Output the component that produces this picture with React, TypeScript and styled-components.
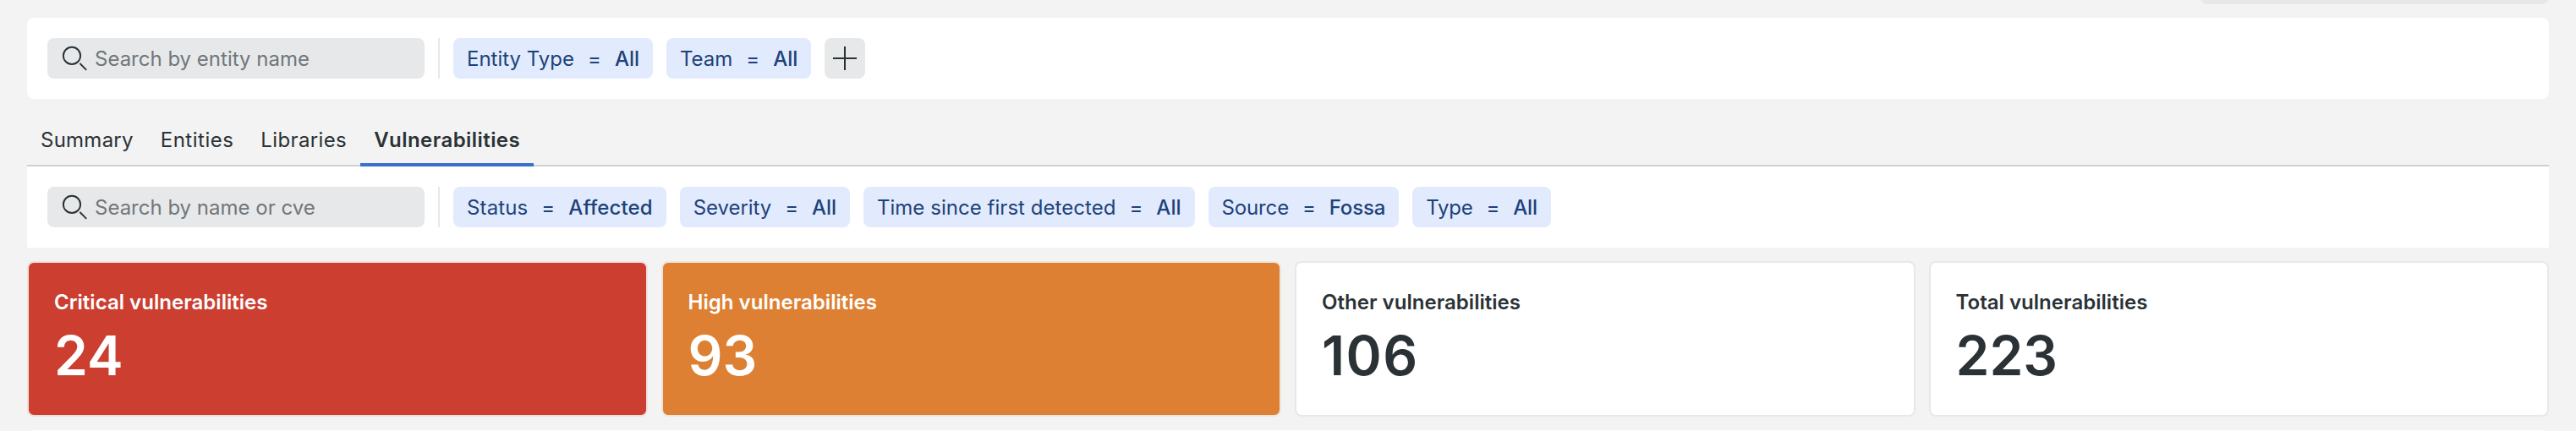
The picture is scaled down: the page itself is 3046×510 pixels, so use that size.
import React from "react";
import styled, { createGlobalStyle } from "styled-components";

const GlobalStyle = createGlobalStyle`
  * { box-sizing: border-box; }
  body {
    margin: 0;
    background: #f3f3f3;
    color: #2a3236;
    font-family: Inter, "Liberation Sans", sans-serif;
    font-size: 24px;
    line-height: 32px;
  }
`;

const Page = styled.main`
  height: 510px;
  overflow: hidden;
  padding: 0 32px;
  display: flex;
  flex-direction: column;
`;

const HeaderField = styled.div`
  align-self: flex-end;
  flex: none;
  width: 412px;
  height: 48px;
  margin-top: -43px;
  border-radius: 8px;
  background: #e7e8ea;
`;

const FilterBar = styled.section<{ $rounded?: boolean }>`
  flex: none;
  height: 96px;
  padding: 24px;
  display: flex;
  gap: 16px;
  background: #fff;
  border-radius: ${(p) => (p.$rounded ? "8px" : "0")};
  margin-top: ${(p) => (p.$rounded ? "16px" : "0")};
`;

const SearchBox = styled.div`
  width: 446px;
  height: 48px;
  padding: 0 16px;
  display: flex;
  align-items: center;
  gap: 8px;
  border-radius: 8px;
  background: #e7e8ea;
  color: #6f777a;
`;

const SearchLabel = styled.span`
  padding-top: 2px;
`;

const Divider = styled.div`
  width: 2px;
  height: 48px;
  background: #e7e8ea;
`;

const Chip = styled.button<{ $tracking: number }>`
  height: 48px;
  padding: 2px 16px 0;
  display: flex;
  align-items: center;
  gap: 16px;
  border: 0;
  border-radius: 8px;
  background: #e2ebfe;
  color: #1d4279;
  font: inherit;
  letter-spacing: ${(p) => p.$tracking}px;
  white-space: nowrap;
`;

const ChipValue = styled.span`
  font-weight: 500;
`;

const AddButton = styled.button`
  width: 48px;
  height: 48px;
  padding: 0;
  display: grid;
  place-items: center;
  border: 0;
  border-radius: 8px;
  background: #e7e8ea;
  color: #2a3236;
`;

const Tabs = styled.nav`
  flex: none;
  height: 80px;
  display: flex;
  align-items: flex-end;
  box-shadow: inset 0 -2px #cbcfd1;
`;

const Tab = styled.a<{ $active?: boolean; $tracking: number }>`
  height: 56px;
  padding: 9px 16px 0;
  border-bottom: 4px solid ${(p) => (p.$active ? "#3a6fcb" : "transparent")};
  font-weight: ${(p) => (p.$active ? 600 : 400)};
  letter-spacing: ${(p) => p.$tracking}px;
`;

const Cards = styled.section`
  flex: none;
  margin: 16px 0;
  display: grid;
  grid-template-columns: repeat(4, 1fr);
  gap: 16px;
`;

const Card = styled.article<{ $fill?: string; $edge?: string }>`
  height: 184px;
  padding: 31px 30px 0;
  border: 2px solid ${(p) => p.$edge ?? "#e7e9e9"};
  border-radius: 8px;
  background: ${(p) => p.$fill ?? "#fff"};
  color: ${(p) => (p.$fill ? "#fff" : "#2a3236")};
  font-weight: 600;
`;

const CardTitle = styled.h2`
  margin: 0;
  font: inherit;
  letter-spacing: 0.03px;
`;

const CardCount = styled.div<{ $tracking?: number }>`
  margin-top: 7px;
  font-size: 64px;
  line-height: 80px;
  letter-spacing: ${(p) => p.$tracking ?? 0}px;
`;

const NextPanel = styled.div`
  flex: none;
  height: 60px;
  border-radius: 8px;
  background: #fff;
`;

const SearchIcon = () => (
  <svg width="32" height="32" viewBox="0 0 32 32" fill="none" stroke="#2a3236" strokeWidth="1.9">
    <circle cx="13" cy="12.9" r="10.1" />
    <path d="M22.4 22 30.2 29.8" />
  </svg>
);

const PlusIcon = () => (
  <svg width="28" height="28" viewBox="0 0 28 28" stroke="currentColor" strokeWidth="2">
    <path d="M0 14H28M14 0V28" />
  </svg>
);

const Search = ({ label }: { label: string }) => (
  <SearchBox>
    <SearchIcon />
    <SearchLabel>{label}</SearchLabel>
  </SearchBox>
);

const Filter = ({ name, value, tracking = 0 }: { name: string; value: string; tracking?: number }) => (
  <Chip $tracking={tracking}>
    <span>{name}</span>
    <span>=</span>
    <ChipValue>{value}</ChipValue>
  </Chip>
);

export default function App() {
  return (
    <>
      <GlobalStyle />
      <Page>
        <HeaderField />
        <FilterBar $rounded>
          <Search label="Search by entity name" />
          <Divider />
          <Filter name="Entity Type" value="All" />
          <Filter name="Team" value="All" />
          <AddButton aria-label="Add filter">
            <PlusIcon />
          </AddButton>
        </FilterBar>
        <Tabs>
          <Tab $tracking={0.25}>Summary</Tab>
          <Tab $tracking={0.5}>Entities</Tab>
          <Tab $tracking={0.37}>Libraries</Tab>
          <Tab $active $tracking={0.44}>Vulnerabilities</Tab>
        </Tabs>
        <FilterBar>
          <Search label="Search by name or cve" />
          <Divider />
          <Filter name="Status" value="Affected" tracking={0.13} />
          <Filter name="Severity" value="All" tracking={-0.07} />
          <Filter name="Time since first detected" value="All" tracking={0.04} />
          <Filter name="Source" value="Fossa" tracking={-0.15} />
          <Filter name="Type" value="All" tracking={-0.2} />
        </FilterBar>
        <Cards>
          <Card $fill="#cb3e30" $edge="#efe0dd">
            <CardTitle>Critical vulnerabilities</CardTitle>
            <CardCount>24</CardCount>
          </Card>
          <Card $fill="#dd8033" $edge="#f0e5db">
            <CardTitle>High vulnerabilities</CardTitle>
            <CardCount>93</CardCount>
          </Card>
          <Card>
            <CardTitle>Other vulnerabilities</CardTitle>
            <CardCount $tracking={1.5}>106</CardCount>
          </Card>
          <Card>
            <CardTitle>Total vulnerabilities</CardTitle>
            <CardCount>223</CardCount>
          </Card>
        </Cards>
        <NextPanel />
      </Page>
    </>
  );
}
